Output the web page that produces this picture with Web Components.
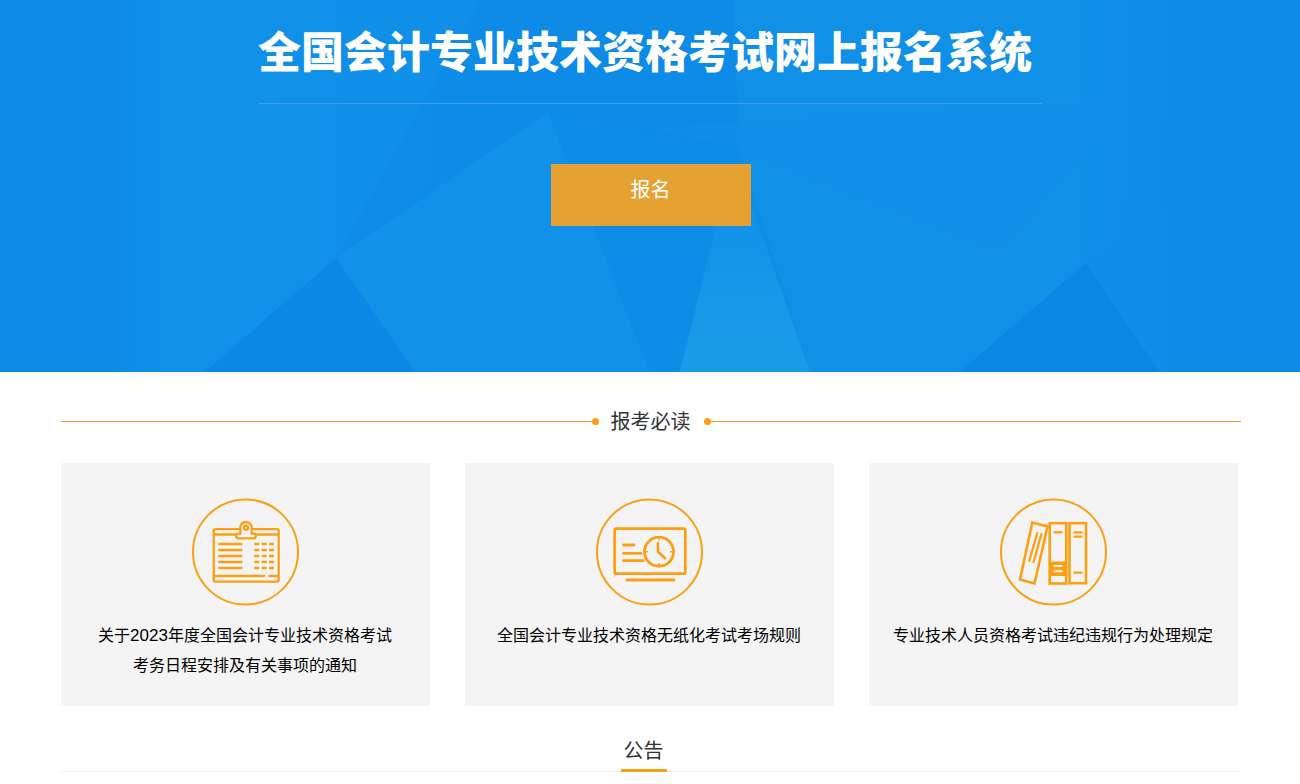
<!DOCTYPE html>
<html lang="zh">
<head>
<meta charset="utf-8">
<title>全国会计专业技术资格考试网上报名系统</title>
<style>
  html, body { margin: 0; padding: 0; background: #fff; overflow: hidden; }
  body { font-family: "Liberation Sans", "Noto Sans CJK SC", sans-serif; }
  .num { font-size: 17px; }
</style>
</head>
<body>
<exam-banner title-text="全国会计专业技术资格考试网上报名系统" action="报名"></exam-banner>
<section-heading>报考必读</section-heading>
<notice-cards>
  <notice-card icon="board">关于<span class="num">2023</span>年度全国会计专业技术资格考试<br>考务日程安排及有关事项的通知</notice-card>
  <notice-card icon="screen">全国会计专业技术资格无纸化考试考场规则</notice-card>
  <notice-card icon="books">专业技术人员资格考试违纪违规行为处理规定</notice-card>
</notice-cards>
<tab-heading>公告</tab-heading>

<script>
class ExamBanner extends HTMLElement {
  constructor(){
    super();
    this.attachShadow({ mode: 'open' });
  }

  connectedCallback(){
    this.shadowRoot.innerHTML = `
    <style>
      :host { display: block; position: relative; height: 372px; background: #0c8ae6; overflow: hidden; color: #fff; }
      svg.bg { position: absolute; inset: 0; width: 100%; height: 100%; }
      .inner { position: relative; width: 784px; margin: 0 auto; }
      h1 { margin: 0; height: 103px; border-bottom: 1px solid #3ea0ec; font-size: 43px; line-height: 106px; font-weight: 900; white-space: nowrap; }
      a { display: block; box-sizing: border-box; width: 200px; height: 62px; margin: 60px 0 0 293px; padding-right: 1px; background: #e5a132; color: #fff; font-size: 20px; line-height: 52px; text-align: center; }
    </style>
    <svg class="bg" viewBox="0 0 1300 372" preserveAspectRatio="none">
      <defs>
        <linearGradient id="side" x1="0" x2="1" y1="0" y2="0">
          <stop offset="0" stop-color="#0c8ae6"/>
          <stop offset=".085" stop-color="#0d8be6"/>
          <stop offset=".13" stop-color="#1190e8"/>
          <stop offset=".55" stop-color="#0e8ce7"/>
          <stop offset=".8" stop-color="#1190e8"/>
          <stop offset=".88" stop-color="#0f8de7"/>
          <stop offset=".91" stop-color="#0c8ae6"/>
          <stop offset="1" stop-color="#0c8ae6"/>
        </linearGradient>
        <linearGradient id="beam" x1="0" x2="0" y1="0" y2="1">
          <stop offset="0" stop-color="#0f8ee8"/>
          <stop offset=".45" stop-color="#1595e8"/>
          <stop offset="1" stop-color="#1b9ce7"/>
        </linearGradient>
        <linearGradient id="leftfade" x1="0" x2="1" y1="0" y2="0">
          <stop offset="0" stop-color="#1091e8" stop-opacity="0"/>
          <stop offset=".3" stop-color="#1091e8" stop-opacity=".55"/>
          <stop offset="1" stop-color="#1091e8" stop-opacity=".55"/>
        </linearGradient>
        <linearGradient id="rightfade" x1="0" x2="1" y1="0" y2="0">
          <stop offset="0" stop-color="#1190e8"/>
          <stop offset=".8" stop-color="#1190e8"/>
          <stop offset="1" stop-color="#0e8ce7"/>
        </linearGradient>
      </defs>
      <rect width="1300" height="372" fill="url(#side)"/>
      <polygon points="110,0 481,0 336,258 205,372 110,372" fill="url(#leftfade)"/>
      <polygon points="481,0 733,0 739,150 548,112 336,258" fill="#0c8ae6" opacity=".55"/>
      <polygon points="336,258 548,112 650,372 415,372" fill="#1192e8"/>
      <polygon points="336,258 415,372 205,372" fill="#0b87e5"/>
      <polygon points="548,112 739,150 810,372 650,372" fill="#0e8de7"/>
      <polygon points="739,170 810,372 680,372 715,230" fill="url(#beam)"/>
      <polygon points="733,0 1165,0 1165,117 1086,263 960,372 810,372 739,150" fill="url(#rightfade)"/>
      <polygon points="1086,263 1160,372 960,372" fill="#0a86e5"/>
      <polygon points="1086,263 1168,212 1168,372 1160,372" fill="#0f8de7"/>
      <polygon points="650,128 739,150 1000,250 1130,100" fill="#1290e8" opacity=".6"/>
    </svg>
    <div class="inner">
      <h1>${this.getAttribute('title-text')}</h1>
      <a>${this.getAttribute('action')}</a>
    </div>
    `;
  }
}

class SectionHeading extends HTMLElement {
  constructor(){
    super();
    this.attachShadow({ mode: 'open' });
    this.shadowRoot.innerHTML = `
    <style>
      :host { display: flex; align-items: center; height: 30px; margin: 34px 59px 0 61px; color: #333; font-size: 20px; line-height: 30px; }
      .line { flex: 1; height: 1px; background: #e8a23a; }
      .dot { width: 7px; height: 7px; border-radius: 50%; background: #fd9f13; }
      span { margin: 2px 13px 0 12px; }
    </style>
    <div class="line"></div><div class="dot"></div><span><slot></slot></span><div class="dot"></div><div class="line"></div>
    `;
  }
}

class NoticeCards extends HTMLElement {
  constructor(){
    super();
    this.attachShadow({ mode: 'open' });
    this.shadowRoot.innerHTML = `
    <style>
      :host { display: flex; gap: 35px; margin: 27px 0 0 61px; }
    </style>
    <slot></slot>
    `;
  }
}

const ICONS = {
  board: `
    <rect x="22.200" y="31.200" width="65" height="52.500" rx="2"/>
    <path d="M22 36.500H46M63 36.500H87"/>
    <path d="M47 35.700h1.800v-6a5.700 5.700 0 0 1 11.400 0v6h1.800a2.300 2.300 0 0 1 0 4.600h-15a2.300 2.300 0 0 1 0-4.600z" fill="#f4f4f4"/>
    <circle cx="54.500" cy="29.700" r="2"/>
    <path d="M26.800 46h24M26.800 52h24M26.800 58h24M26.800 64h24M26.800 70h24"/>
    <path d="M62.800 46h5M70.200 46h5M77.500 46h5M62.800 52h5M70.200 52h5M77.500 52h5M62.800 58h5M70.200 58h5M77.500 58h5M62.800 64h5M70.200 64h5M77.500 64h5M62.800 70h5M70.200 70h5M77.500 70h5"/>
    <path d="M22 78h51.500M77 78h10"/>`,
  screen: `
    <rect x="19.200" y="30.700" width="70.600" height="45" rx="1.500" stroke-width="2.800"/>
    <path d="M31.500 82h47" stroke-linecap="round" stroke-width="2.800"/>
    <path d="M28 47h10.500M28 55.300h17.500M28 62.700h19.500" stroke-linecap="round" stroke-width="2.800"/>
    <circle cx="63.500" cy="53.700" r="14.500" fill="#f4f4f4" stroke-width="2.800"/>
    <path d="M62.500 45v8.700l7 6.600" stroke-linecap="round" stroke-width="2.600"/>
    <path d="M63.500 40.500v2M63.500 65v2M50.500 53.700h2M74.500 53.700h2" stroke-width="1.500"/>`,
  books: `
    <path d="M32.800 24.500 L48 28.500 L35 85.500 L20.500 81.500 Z" stroke-width="2.600"/>
    <path d="M38 34.300 L29.500 63.700M42.200 35.300 L33.800 64.700" stroke-width="2.300"/>
    <rect x="50.200" y="25.200" width="16.500" height="60.300" stroke-width="2.600"/>
    <path d="M54 34.300h9" stroke-width="2.300"/>
    <rect x="50.200" y="63.500" width="16.500" height="14.500" fill="#fd9f13" stroke="none"/>
    <path d="M54 68h9M54 73.200h9" stroke="#f4f4f4" stroke-width="2"/>
    <rect x="70" y="25.200" width="16.500" height="60" stroke-width="2.600"/>
    <path d="M74 34.300h9M74 38.700h9M74 74.700h9" stroke-width="2.300"/>`
};

class NoticeCard extends HTMLElement {
  constructor(){
    super();
    this.attachShadow({ mode: 'open' });
  }

  connectedCallback(){
    this.shadowRoot.innerHTML = `
    <style>
      :host { display: block; box-sizing: border-box; width: 369px; height: 243px; padding: 35px 1px 0 0; background: #f4f4f4; color: #000; font-size: 16px; line-height: 30px; text-align: center; }
      svg { display: block; width: 108px; height: 108px; margin: 0 auto 15px; fill: none; stroke: #fd9f13; stroke-width: 2.300; }
      circle.ring { stroke-width: 2; }
    </style>
    <svg viewBox="-0.5 0 108 108">
      <circle class="ring" cx="54" cy="54" r="52.500"/>
      ${ICONS[this.getAttribute('icon')]}
    </svg>
    <slot></slot>
    `;
  }
}

class TabHeading extends HTMLElement {
  constructor(){
    super();
    this.attachShadow({ mode: 'open' });
    this.shadowRoot.innerHTML = `
    <style>
      :host { display: flex; justify-content: center; margin: 30px 59px 0 61px; padding-right: 14px; height: 36px; box-sizing: border-box; border-bottom: 1px solid #eee; color: #333; font-size: 20px; }
      span { display: block; width: 46px; height: 36px; box-sizing: border-box; padding-right: 1px; border-bottom: 3px solid #fd9f13; line-height: 30px; text-align: center; }
    </style>
    <span><slot></slot></span>
    `;
  }
}

customElements.define('exam-banner', ExamBanner);
customElements.define('section-heading', SectionHeading);
customElements.define('notice-cards', NoticeCards);
customElements.define('notice-card', NoticeCard);
customElements.define('tab-heading', TabHeading);
</script>
</body>
</html>
